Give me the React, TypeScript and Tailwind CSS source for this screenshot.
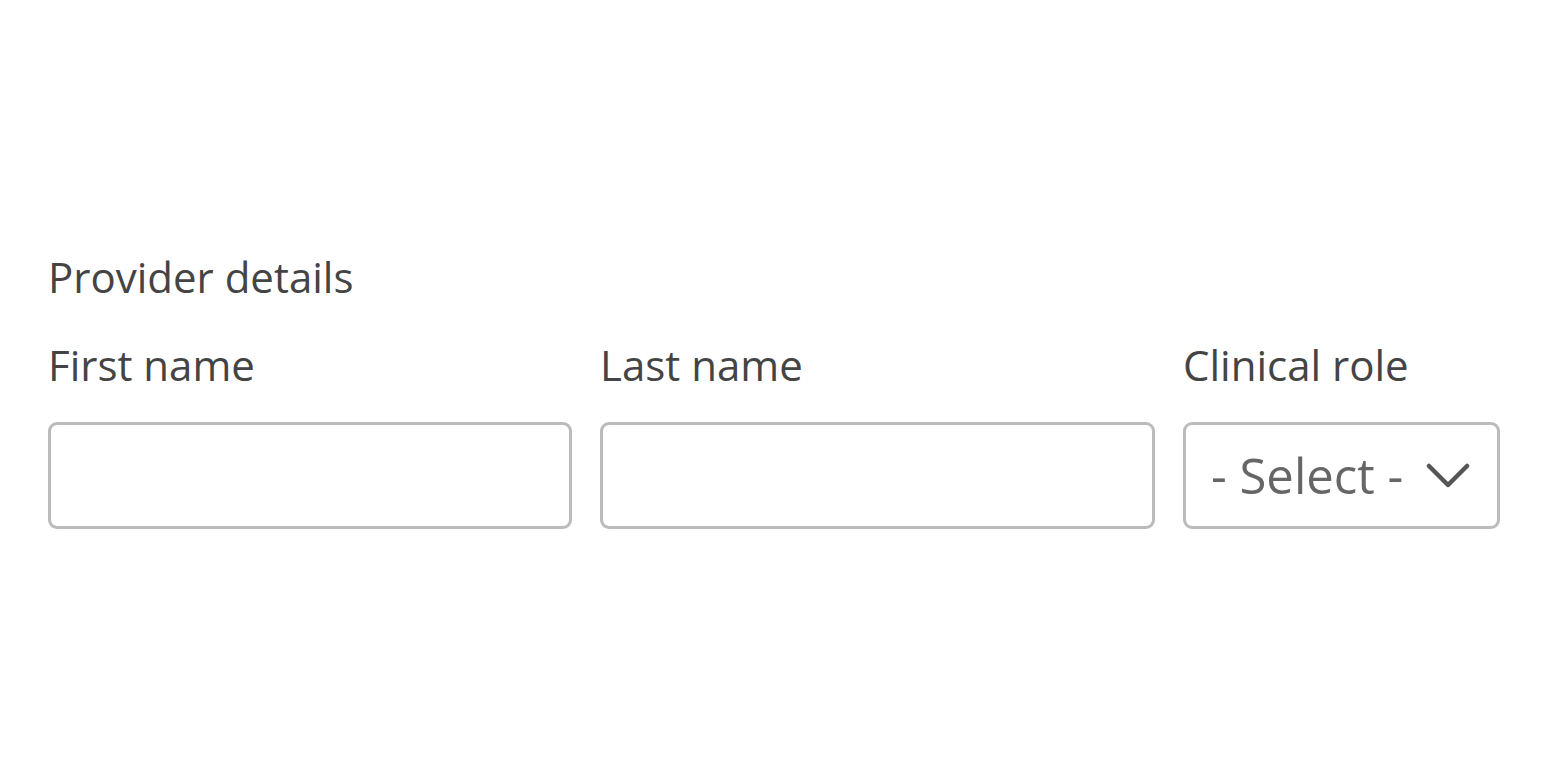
import React from 'react';

const labelCls = "text-[42px] leading-none text-[#444444]";
const inputCls = "h-[107px] w-full rounded-[9px] border-[3px] border-[#bbbbbb] bg-white";

export default function App() {
  return (
    <div className="min-h-screen bg-white px-[48px] pt-[256px]" style={{ fontFamily: '"Open Sans", "Liberation Sans", sans-serif' }}>
      <div className={labelCls}>Provider details</div>
      <div className="mt-[46px] grid grid-cols-[524px_555px_317px] gap-x-[28px]">
        <label className="flex flex-col">
          <span className={labelCls}>First name</span>
          <input className={`mt-[36px] ${inputCls}`} />
        </label>
        <label className="flex flex-col">
          <span className={labelCls}>Last name</span>
          <input className={`mt-[36px] ${inputCls}`} />
        </label>
        <label className="flex flex-col">
          <span className={labelCls}>Clinical role</span>
          <div className={`mt-[36px] flex items-center justify-between pl-[25px] pr-[27px] ${inputCls}`}>
            <span className="text-[49px] leading-none text-[#666666]">- Select -</span>
            <svg width="44" height="28" viewBox="0 0 44 28" fill="none">
              <path d="M3 4 L22 23 L41 4" stroke="#555555" strokeWidth="4.5" strokeLinecap="round" strokeLinejoin="round" />
            </svg>
          </div>
        </label>
      </div>
    </div>
  );
}
